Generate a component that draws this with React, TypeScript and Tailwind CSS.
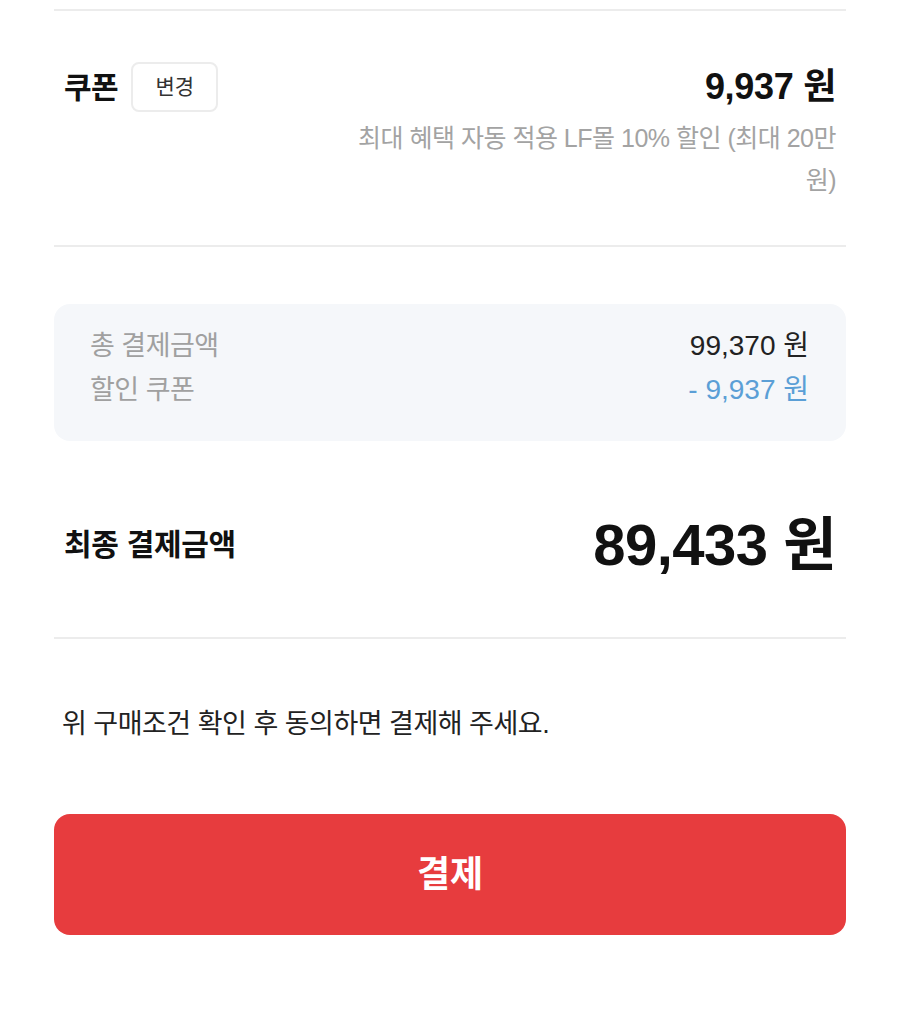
const font = { fontFamily: '"Liberation Sans", "Noto Sans CJK KR", sans-serif' };

function Divider() {
  return <div className="h-[2px] w-full bg-[#ececec]" />;
}

export default function App() {
  return (
    <div className="min-h-screen w-[900px] bg-white px-[54px] pt-[9px] text-[#111]" style={font}>
      <Divider />

      {/* 쿠폰 */}
      <section className="flex items-start justify-between px-[10px] pt-[51px] pb-[44px]">
        <div className="flex items-center gap-[13px]">
          <span className="text-[30px] font-bold tracking-[-0.5px]">쿠폰</span>
          <button className="flex h-[50px] w-[87px] items-center justify-center rounded-[8px] border-2 border-[#ececec] text-[21px] text-[#333]">
            변경
          </button>
        </div>
        <div className="flex flex-col items-end">
          <span className="text-[36px] leading-[50px] font-bold tracking-[-0.3px]">9,937 원</span>
          <p className="mt-[5px] text-right text-[25px] leading-[42px] text-[#a3a3a3] tracking-[-0.5px]">
            최대 혜택 자동 적용 LF몰 10% 할인 (최대 20만
            <br />
            원)
          </p>
        </div>
      </section>

      <Divider />

      {/* 금액 요약 */}
      <section className="mt-[57px] rounded-[16px] bg-[#f5f7fa] pt-[20px] pr-[37px] pb-[29px] pl-[36px]">
        <div className="flex h-[44px] items-center justify-between text-[27px]">
          <span className="text-[#a0a0a0] tracking-[-0.5px]">총 결제금액</span>
          <span className="text-[28px] text-[#222]">99,370 원</span>
        </div>
        <div className="flex h-[44px] items-center justify-between text-[27px]">
          <span className="text-[#a0a0a0] tracking-[-0.5px]">할인 쿠폰</span>
          <span className="text-[28px] text-[#5b9fd6]">- 9,937 원</span>
        </div>
      </section>

      {/* 최종 결제금액 */}
      <section className="mt-[71px] flex h-[64px] items-center justify-between px-[10px]">
        <span className="text-[30px] font-bold tracking-[-0.3px]">최종 결제금액</span>
        <span className="text-[58px] font-bold tracking-[-0.5px]">89,433 원</span>
      </section>

      <div className="mt-[61px]">
        <Divider />
      </div>

      <p className="mt-[68px] px-[8px] text-[27px] leading-[34px] text-[#222] tracking-[-0.5px]">
        위 구매조건 확인 후 동의하면 결제해 주세요.
      </p>

      <button className="mt-[73px] flex h-[121px] w-full items-center justify-center rounded-[16px] bg-[#e73c3e] text-[36px] font-bold text-white">
        결제
      </button>
    </div>
  );
}
